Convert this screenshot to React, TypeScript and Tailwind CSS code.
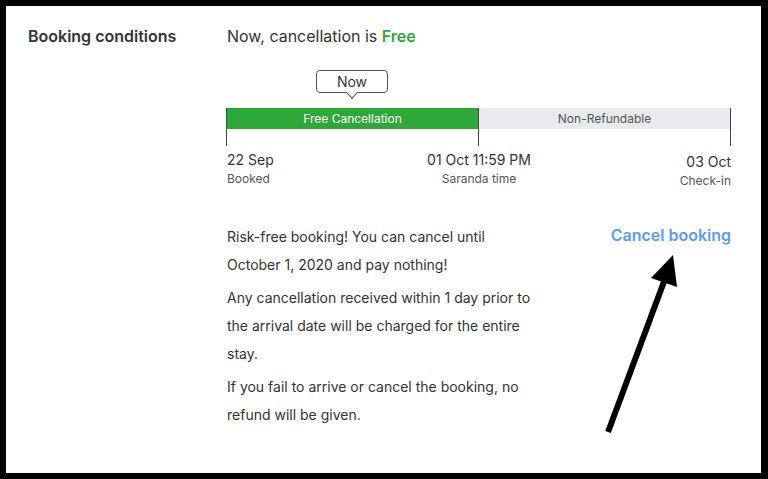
import React from 'react';

const font = { fontFamily: 'Inter, "Noto Sans", sans-serif' };

export default function App() {
    return (
        <div className="relative w-[768px] h-[479px] bg-black pl-[6px] pt-[6px] pr-[7px] pb-[6px]" style={font}>
            <div className="w-full h-full bg-white flex pt-[18px] text-[#333]">
                <div className="w-[220px] pl-[22px]">
                    <h2 className="text-[16px] leading-6 font-semibold text-[#333]">Booking conditions</h2>
                </div>

                <div className="w-[505px]">
                    <p className="pl-px text-[16px] leading-6 text-[#333]">
                        Now, cancellation is <span className="font-semibold text-[#2fa83a]">Free</span>
                    </p>

                    {/* now marker */}
                    <div className="mt-[22px] w-[252px] flex justify-center">
                        <div className="relative w-[72px] h-[23px] border border-[#555] rounded-[4px] flex items-center justify-center text-[14px] text-[#333]">
                            Now
                            <span className="absolute left-1/2 -bottom-[5px] -ml-[4px] w-[8px] h-[8px] bg-white border-r border-b border-[#555] rotate-45"></span>
                        </div>
                    </div>

                    {/* timeline */}
                    <div className="mt-[15px] flex h-[38px]">
                        <div className="w-[252px] border-l border-[#444]">
                            <div className="h-[21px] bg-[#2fa83a] text-white text-[12px] flex items-center justify-center">Free Cancellation</div>
                        </div>
                        <div className="w-[253px] border-l border-r border-[#444]">
                            <div className="h-[21px] bg-[#e9eaed] text-[#555] text-[12px] flex items-center justify-center">Non-Refundable</div>
                        </div>
                    </div>

                    <div className="mt-[4px] grid grid-cols-3 w-[505px] pl-px">
                        <div>
                            <div className="text-[14px] leading-5 text-[#333]">22 Sep</div>
                            <div className="text-[12px] leading-[18px] text-[#555]">Booked</div>
                        </div>
                        <div className="text-center -mx-4">
                            <div className="text-[14px] leading-5 text-[#333]">01 Oct 11:59 PM</div>
                            <div className="text-[12px] leading-[18px] text-[#555]">Saranda time</div>
                        </div>
                        <div className="text-right pt-[2px]">
                            <div className="text-[14px] leading-5 text-[#333]">03 Oct</div>
                            <div className="text-[12px] leading-[18px] text-[#555]">Check-in</div>
                        </div>
                    </div>

                    <div className="mt-[33px] pl-px flex justify-between items-start">
                        <div className="w-[314px] text-[14px] leading-[28px] text-[#333] flex flex-col gap-[5px]">
                            <p>Risk-free booking! You can cancel until October 1, 2020 and pay nothing!</p>
                            <p>Any cancellation received within 1 day prior to the arrival date will be charged for the entire stay.</p>
                            <p>If you fail to arrive or cancel the booking, no refund will be given.</p>
                        </div>
                        <button className="text-[16px] leading-6 font-semibold text-[#5a9cf8]">Cancel booking</button>
                    </div>
                </div>
            </div>

            {/* annotation arrow */}
            <svg className="absolute left-0 top-0 pointer-events-none" width="768" height="479" viewBox="0 0 768 479">
                <line x1="608" y1="432" x2="665" y2="279" stroke="#000" strokeWidth="6" />
                <polygon points="673,255 651,278 677,287" fill="#000" />
            </svg>
        </div>
    );
}
